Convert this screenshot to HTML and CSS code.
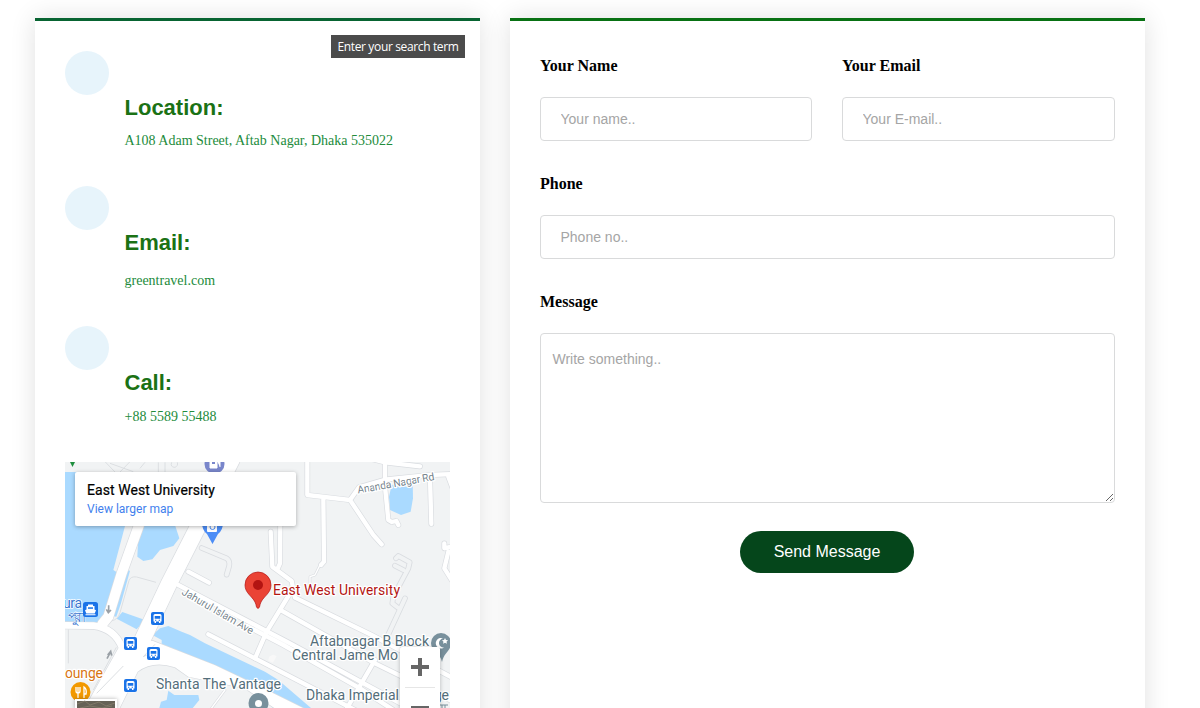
FILE: index.html
```html
<!DOCTYPE html>
<html lang="en">
<head>
<meta charset="utf-8">
<title>Contact</title>
<link rel="stylesheet" href="styles.css">
</head>
<body>
<main class="contact">
  <section class="info card">
    <div class="tooltip">Enter your search term</div>
    <div class="item location"><i class="dot"></i><h4>Location:</h4><p>A108 Adam Street, Aftab Nagar, Dhaka 535022</p></div>
    <div class="item email"><i class="dot"></i><h4>Email:</h4><p>greentravel.com</p></div>
    <div class="item phone"><i class="dot"></i><h4>Call:</h4><p>+88 5589 55488</p></div>
    <div class="map">
      <svg class="map-canvas" viewBox="65 462 385 246" width="385" height="246">
        <defs>
          <g id="bus">
            <rect x="-7" y="-7" width="14" height="14" rx="2.500" fill="#fff" opacity=".7"/>
            <rect x="-6.500" y="-6.500" width="13" height="13" rx="2" fill="#1a73e8"/>
            <path d="M-4-3q0-1.500 1.500-1.500h5q1.500 0 1.500 1.500v6h-1v1.500h-1.500V3h-3v1.500H-3V3h-1z" fill="#fff"/>
            <path d="M-2.800-2.500h5.600V.2h-5.600zM-2.500 1.200h1.300v1h-1.300zM1.200 1.200h1.300v1H1.200z" fill="#1a73e8"/>
          </g>
          <g id="roads">
            <path class="w34" d="M240-40L221 18 170 160 130 290 112 312"/>
            <path class="w52" d="M500-180L400 18 310 195 225 375"/>
            <path class="w22" d="M-10 316L85 317Q150 325 172 385"/>
            <path d="M190 370L262 362 450 436 560 488 730 572H640L540 505 370 470 330 442Q265 420 218 455L160 572H55L160 385z"/>
            <path class="w14" d="M340 195L555 307 675 370 1010 552M545 318L655 375 885 505 985 570M430 343L570 415 870 570"/>
            <path class="w14" d="M570 415L605 335 672 225M370 155L432 188"/>
            <path class="w14" d="M617 35L622 140 680 183 690 233 920 345 1165 475M646 0L645 130 637 148M650 272L930 430 1165 545M930 420L840 575"/>
            <path class="w14" d="M727-185V-75L855-60 882-98 965-122 1095-135 1165-138M775-65L777 125 768 135M855-60L925 45 950 73M900-188L960-173 1065-161"/>
            <path class="w14" d="M960-185V-100L970 0 980 6 994 3 1000 15M1095-125L1099 12M1150-130L1165-90M1138 70V85L1160 80M1150 95L1138 145 1160 180"/>
            <path class="w5" d="M764 137L750 165 735 170V195M440 564L480 510"/>
          </g>
          <g id="lanes">
            <path d="M410 84L485 115Q496 122 492 140L485 164M993 115L1000 108 1034 127 1030 145 985 230 982 250 1000 264M990 137L1015 150M1020 235L960 365"/>
          </g>
        </defs>
        <rect x="65" y="462" width="385" height="246" fill="#f1f3f4"/>
        <g transform="translate(65 520) scale(.33333)">
          <g fill="#aadaff">
            <path d="M0-144H230L180 18 145 150 160 160 110 300 95 316H0z"/>
            <path d="M222 0H325L343 55 325 78 285 90 262 118 235 123 217 110z"/>
            <path d="M178 150L195 152 168 250 154 290 142 288z"/>
            <path d="M172 276L240 300 215 328 155 296z"/>
            <path d="M310 318L350 335 375 345 420 370 600 455 640 480 745 570H630L560 500 440 450 330 398 290 380V360L262 345 285 325z"/>
            <path d="M310 512L328 525H400L403 540 380 568H282L288 545 305 540z"/>
            <path d="M980-105L1043-120 1044-65 1037-25 1008-15 975-30 972-70z"/>
          </g>
          <use href="#lanes" class="lane-edge"/>
          <use href="#lanes" class="lane"/>
          <path class="thin" d="M140 302Q158 300 165 278L192 182Q197 168 215 171L273 187M10 328V430M120-175L150-144M135-170L205-145M195-175L165-144M240-173L225-155M280-173V-144M300-173V-144M320-173Q315-158 330-158 340-162 337-173"/>
          <use href="#roads" class="road casing"/>
          <use href="#roads" class="road fill"/>
          <path class="thin" d="M95 520L175 438M270 373L235 410 252 402M85 510L154 382"/>
          <path d="M612 410l12-6 11 4-11 20-14-6z" fill="#f8f8f8"/>
          <path d="M131 256V276M124 268L130 278 138 270M126 416L136 397M128 405L137 394 140 407" fill="none" stroke="#9aa0a6" stroke-width="5"/>
        </g>
        <circle cx="214.500" cy="464" r="10" fill="#7986cb"/>
        <path d="M210 459h7v9h-7zM217 461l3 1v5" fill="#fff" stroke="#fff"/>
        <path d="M212 461h3v3h-3z" fill="#7986cb"/>
        <path d="M202 523q0 7 5 11l5.500 10 5.500-10q5-4 5-11z" fill="#4c8df6"/>
        <path d="M207 525h10v6q0 1-1 1h-8q-1 0-1-1z" fill="#fff"/><circle cx="212.500" cy="527" r="2.500" fill="none" stroke="#4c8df6"/>
        <path d="M70 462h5l-2.500 5z" fill="#1e8e3e"/>
        <use href="#bus" x="157.500" y="618.500"/><use href="#bus" x="130.500" y="643.500"/><use href="#bus" x="153.500" y="653.500"/><use href="#bus" x="130.500" y="685.500"/>
        <circle cx="80.500" cy="692" r="10" fill="#f29900"/>
        <path d="M76 687v4q0 2 2 2t2-2v-4M78 687v11M84 698v-11q3 2 2 7h-2" fill="none" stroke="#fff" stroke-width="1.300"/>
        <g class="label">
          <text transform="translate(358 493.500) rotate(-10)" class="street" textLength="78">Ananda Nagar Rd</text>
          <text transform="translate(181 594) rotate(30)" class="street" textLength="81">Jahurul Islam Ave</text>
          <text x="310" y="646" textLength="119">Aftabnagar B Block</text>
          <text x="292" y="660" textLength="106">Central Jame Mo</text>
          <text x="156" y="689" textLength="125">Shanta The Vantage</text>
          <text x="306" y="700" textLength="93">Dhaka Imperial</text><text x="434" y="700" textLength="15">ge</text>
          <text x="63" y="608" class="transit" textLength="19">ura</text><text x="64" y="622" class="transit bangla" textLength="18">পুরা</text>
          <text x="65" y="678" class="orange" textLength="38">ounge</text>
          <text x="273" y="595" class="main-place" textLength="127">East West University</text>
        </g>
        <rect x="83" y="602" width="15" height="15" rx="2.500" fill="#1a73e8"/>
        <path d="M88 604.500h5v1.500h1.500v3.500l1.500.8-1.300 3.200h-8.400L85 610.300l1.500-.8V606H88zM85.500 614.200h10v1h-10z" fill="#fff"/><path d="M88 607.300h5v1.500h-5z" fill="#1a73e8"/>
        <path d="M440 705h8M442 705v3M445 705v3" stroke="#78909c" fill="none"/>
        <path d="M258 572a13 13 0 0 1 13 13c0 8-7 11-10 17q-1 2-1.500 5-1.500 3-3 0-.5-3-1.500-5c-3-6-10-9-10-17a13 13 0 0 1 13-13z" fill="#ea4335" stroke="#b31412" stroke-width=".7"/>
        <circle cx="258" cy="585" r="5" fill="#b31412"/>
        <path d="M441 633a10 10 0 0 1 10 10c0 8-7 9-9 19-2-10-11-11-11-19a10 10 0 0 1 10-10z" fill="#78909c"/>
        <path d="M443 638.500a5.200 5.200 0 1 0 1 9 4.500 4.500 0 1 1-1-9zM445 638l1 2 2 .2-1.500 1.500.5 2-2-1-2 1 .5-2-1.500-1.500 2-.2z" fill="#fff"/>
        <path d="M258.500 693a10 10 0 0 1 10 10q0 4-3 8h-14q-3-4-3-8a10 10 0 0 1 10-10z" fill="#78909c"/><circle cx="258.500" cy="703.500" r="3.500" fill="#fff"/>
      </svg>
      <div class="place"><strong>East West University</strong><span>View larger map</span></div>
      <div class="zoom"><i class="plus"></i><i class="minus"></i></div>
      <svg class="satellite" width="42" height="10"><path d="M0 0h42v10H0z" fill="#fff"/><path d="M2 2h38v8H2z" fill="#666257"/><path d="M2 5l8-3 5 4 9-3 7 4 9-3M5 9l10-2 12 2 10-2" fill="none" stroke="#807968"/></svg>
    </div>
  </section>
  <form class="form card">
    <div class="row">
      <label>Your Name<input type="text" placeholder="Your name.."></label>
      <label>Your Email<input type="email" placeholder="Your E-mail.."></label>
    </div>
    <label>Phone<input type="text" placeholder="Phone no.."></label>
    <label>Message<textarea placeholder="Write something.."></textarea></label>
    <button type="button">Send Message</button>
  </form>
</main>
</body>
</html>
```
FILE: styles.css
```css
* { box-sizing: border-box; }
body { margin: 0; height: 708px; overflow: hidden; background: #fff; }
.contact { display: grid; grid-template-columns: 445px 635px; grid-template-rows: 760px; gap: 30px; padding: 18px 0 0 35px; height: 708px; overflow: hidden; }
.card { position: relative; background: #fff; padding: 30px 30px 0; box-shadow: 0 0 24px rgba(0, 0, 0, .12); border-top: 3px solid #086432; }
.tooltip { position: absolute; top: 14px; right: 15px; width: 134px; height: 23px; background: #4b4b4b; color: #fff; font: 12px/23px "Open Sans", "Noto Sans", sans-serif; letter-spacing: -.36px; text-align: center; white-space: nowrap; }
.item { display: grid; grid-template-columns: 59.5px 1fr; grid-template-rows: 44px 26px auto; height: 135px; }
.dot { width: 44px; height: 44px; border-radius: 50%; background: #e7f4fb; }
.item h4, .item p { grid-column: 2; margin: 0; }
.item h4 { grid-row: 2; font: bold 22px/26px "Liberation Sans", Arial, sans-serif; color: #1b7215; }
.item p { grid-row: 3; padding-top: 11px; font: 14px/17px "Liberation Serif", "Times New Roman", serif; color: #228b3b; }
.email { height: 140px; }
.email p { padding-top: 16px; }
.phone { height: 136px; }
.phone p { padding-top: 12px; }
.map { position: relative; width: 385px; height: 246px; overflow: hidden; }
.map-canvas { display: block; }
.road { stroke-linecap: round; stroke-linejoin: round; }
.fill { fill: none; stroke: #fff; --edge: 0px; }
.casing { fill: none; stroke: #d9dce0; --edge: 4px; }
.w52 { stroke-width: calc(48px + var(--edge)); }
.w34 { stroke-width: calc(30px + var(--edge)); }
.w22 { stroke-width: calc(20px + var(--edge)); }
.w14 { stroke-width: calc(13px + var(--edge)); }
.w5 { stroke-width: calc(4px + var(--edge)); }
#roads path:not([class]) { fill: #fff; stroke-width: var(--edge); }
.lane-edge, .lane { fill: none; stroke: #d9dce0; stroke-width: 17px; stroke-linecap: round; stroke-linejoin: round; }
.lane { stroke: #f1f3f4; stroke-width: 12px; }
.thin { fill: none; stroke: #dcdfe2; stroke-width: 3px; }
.label { font: 14px Roboto, sans-serif; fill: #546e7a; stroke: #fff; stroke-width: 2.5px; stroke-linejoin: round; paint-order: stroke; }
.label .street { font-size: 10.5px; fill: #75838c; }
.label .orange { fill: #d87513; }
.label .transit { fill: #3775cf; stroke-width: 1.5px; }
.label .bangla { font-size: 14px; stroke-width: 1px; }
.label .main-place { fill: #b31412; }
.place { position: absolute; left: 10px; top: 10px; width: 221px; height: 54px; padding: 10px 12px; background: #fff; border-radius: 2px; box-shadow: 0 1px 4px rgba(0, 0, 0, .3); font-family: Roboto, sans-serif; }
.place strong { display: block; font-size: 14px; font-weight: 400; line-height: 17px; letter-spacing: .06px; color: #000; -webkit-text-stroke: .2px #000; }
.place span { display: block; font-size: 12px; line-height: 20px; color: #427fed; }
.zoom { position: absolute; left: 335px; top: 185px; width: 40px; height: 81px; background: #fff; border-radius: 2px; box-shadow: 0 1px 4px rgba(0, 0, 0, .25); display: grid; grid-template-rows: 40px 40px; justify-items: center; align-items: center; }
.zoom::before { content: ""; position: absolute; left: 5px; top: 40px; width: 30px; height: 1px; background: #e6e6e6; }
.plus { width: 18px; height: 18px; background: linear-gradient(#666, #666) center / 18px 4px no-repeat, linear-gradient(#666, #666) center / 4px 18px no-repeat; }
.minus { width: 18px; height: 4px; margin-top: 2px; background: #666; }
.satellite { position: absolute; left: 10px; top: 237px; filter: drop-shadow(0 0 2px rgba(0, 0, 0, .3)); }
.form { display: flex; flex-direction: column; border-top-color: #087113; }
.row { display: grid; grid-template-columns: 272px 273px; gap: 30px; }
label { display: block; height: 118px; flex: none; padding-top: 5px; font: bold 16px/19px "Liberation Serif", "Times New Roman", serif; color: #000; }
input, textarea { display: block; width: 100%; margin: 22px 0 0; border: 1px solid #d9dadb; border-radius: 4px; background: #fff; font: 14px/20px "Liberation Sans", Arial, sans-serif; outline: 0; }
input { height: 44px; padding: 0 19.5px; }
textarea { height: 170px; padding: 15px 11.5px; resize: both; }
::placeholder { color: #a5a5a5; opacity: 1; }
button { align-self: center; flex: none; width: 174px; height: 42px; margin: 126px 1px 0 0; border: 0; border-radius: 21px; background: #05461b; color: #fff; font: 16px "Liberation Sans", Arial, sans-serif; }
```
